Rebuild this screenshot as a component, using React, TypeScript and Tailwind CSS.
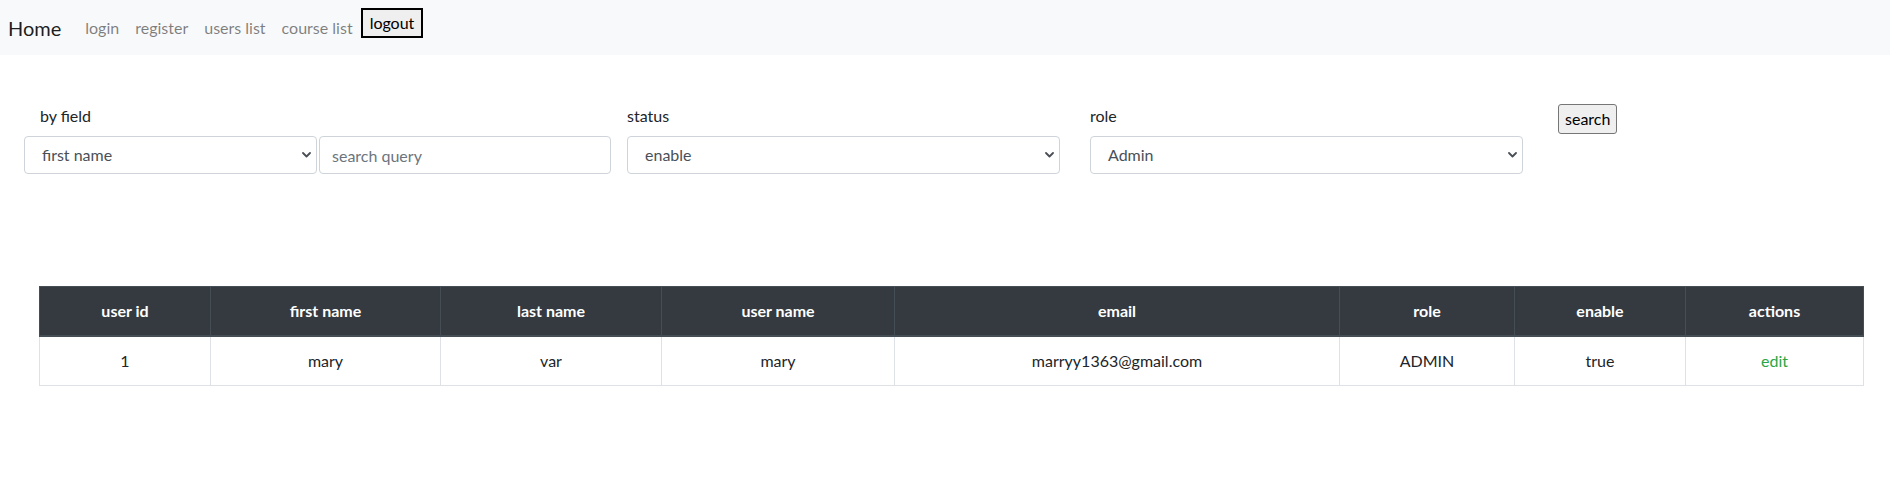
import { useState } from "react";

type User = {
  id: number;
  firstName: string;
  lastName: string;
  userName: string;
  email: string;
  role: string;
  enable: boolean;
};

const users: User[] = [
  {
    id: 1,
    firstName: "mary",
    lastName: "var",
    userName: "mary",
    email: "marryy1363@gmail.com",
    role: "ADMIN",
    enable: true,
  },
];

const columns = [
  { label: "user id", width: "w-[171px]" },
  { label: "first name", width: "w-[230px]" },
  { label: "last name", width: "w-[221px]" },
  { label: "user name", width: "w-[233px]" },
  { label: "email", width: "w-[445px]" },
  { label: "role", width: "w-[175px]" },
  { label: "enable", width: "w-[171px]" },
  { label: "actions", width: "w-[178px]" },
];

const Chevron = () => (
  <svg
    className="pointer-events-none absolute right-[6px] top-1/2 -translate-y-1/2"
    width="9"
    height="6"
    viewBox="0 0 9 6"
  >
    <path
      d="M1 1l3.5 3.5L8 1"
      fill="none"
      stroke="#4a4f55"
      strokeWidth="1.8"
      strokeLinecap="round"
      strokeLinejoin="round"
    />
  </svg>
);

type SelectProps = {
  width: string;
  value: string;
  options: string[];
  onChange: (v: string) => void;
};

const Select = ({ width, value, options, onChange }: SelectProps) => (
  <div className={`relative ${width}`}>
    <select
      value={value}
      onChange={(e) => onChange(e.target.value)}
      className="h-[38px] w-full appearance-none rounded-[4px] border border-[#ced4da] bg-white pl-[17px] pr-8 text-base text-[#495057] outline-none"
    >
      {options.map((o) => (
        <option key={o}>{o}</option>
      ))}
    </select>
    <Chevron />
  </div>
);

export default function App() {
  const [field, setField] = useState("first name");
  const [query, setQuery] = useState("");
  const [status, setStatus] = useState("enable");
  const [role, setRole] = useState("Admin");

  return (
    <div className="min-h-[488px] bg-white font-['Lato',sans-serif] text-[#212529]">
      <nav className="flex h-[55px] items-start bg-[#f8f9fa] py-2 pl-2">
        <a className="mr-4 py-[5px] text-[20px] leading-[30px] text-black/90">
          Home
        </a>
        {["login", "register", "users list", "course list"].map((l) => (
          <a key={l} className="px-2 py-2 text-base leading-6 text-black/50">
            {l}
          </a>
        ))}
        <button
          type="button"
          className="h-[30px] border-2 border-black bg-[#efefef] px-[7px] text-base leading-5 text-black"
        >
          logout
        </button>
      </nav>

      <div className="mt-[49px] flex items-start pl-6">
        <div className="flex flex-col">
          <label className="mb-2 ml-4 text-base leading-6">by field</label>
          <div className="flex gap-[2px]">
            <Select
              width="w-[293px]"
              value={field}
              options={["first name", "last name", "user name", "email"]}
              onChange={setField}
            />
            <input
              value={query}
              onChange={(e) => setQuery(e.target.value)}
              placeholder="search query"
              className="h-[38px] w-[292px] rounded-[4px] border border-[#ced4da] px-3 text-base text-[#495057] outline-none placeholder:text-[#6c757d]"
            />
          </div>
        </div>
        <div className="ml-4 flex flex-col">
          <label className="mb-2 text-base leading-6">status</label>
          <Select
            width="w-[433px]"
            value={status}
            options={["enable", "disable"]}
            onChange={setStatus}
          />
        </div>
        <div className="ml-[30px] flex flex-col">
          <label className="mb-2 text-base leading-6">role</label>
          <Select
            width="w-[433px]"
            value={role}
            options={["Admin", "User"]}
            onChange={setRole}
          />
        </div>
        <button
          type="button"
          className="ml-[35px] h-[30px] rounded-[3px] border border-[#767676] bg-[#efefef] px-[6px] text-base leading-5 text-black"
        >
          search
        </button>
      </div>

      <div className="mt-[112px] pl-[39px]">
        <table className="w-[1824px] table-fixed border-collapse text-center text-base">
          <thead>
            <tr className="bg-[#343a40] text-white">
              {columns.map((c) => (
                <th
                  key={c.label}
                  className={`${c.width} border border-b-2 border-[#454d55] px-3 py-3 font-bold leading-6`}
                >
                  {c.label}
                </th>
              ))}
            </tr>
          </thead>
          <tbody>
            {users.map((u) => (
              <tr key={u.id}>
                <td className="border border-[#dee2e6] px-3 py-3 leading-6">{u.id}</td>
                <td className="border border-[#dee2e6] px-3 py-3 leading-6">{u.firstName}</td>
                <td className="border border-[#dee2e6] px-3 py-3 leading-6">{u.lastName}</td>
                <td className="border border-[#dee2e6] px-3 py-3 leading-6">{u.userName}</td>
                <td className="border border-[#dee2e6] px-3 py-3 leading-6">{u.email}</td>
                <td className="border border-[#dee2e6] px-3 py-3 leading-6">{u.role}</td>
                <td className="border border-[#dee2e6] px-3 py-3 leading-6">
                  {u.enable ? "true" : "false"}
                </td>
                <td className="border border-[#dee2e6] px-3 py-3 leading-6">
                  <a className="text-[#28a745]">edit</a>
                </td>
              </tr>
            ))}
          </tbody>
        </table>
      </div>
    </div>
  );
}
